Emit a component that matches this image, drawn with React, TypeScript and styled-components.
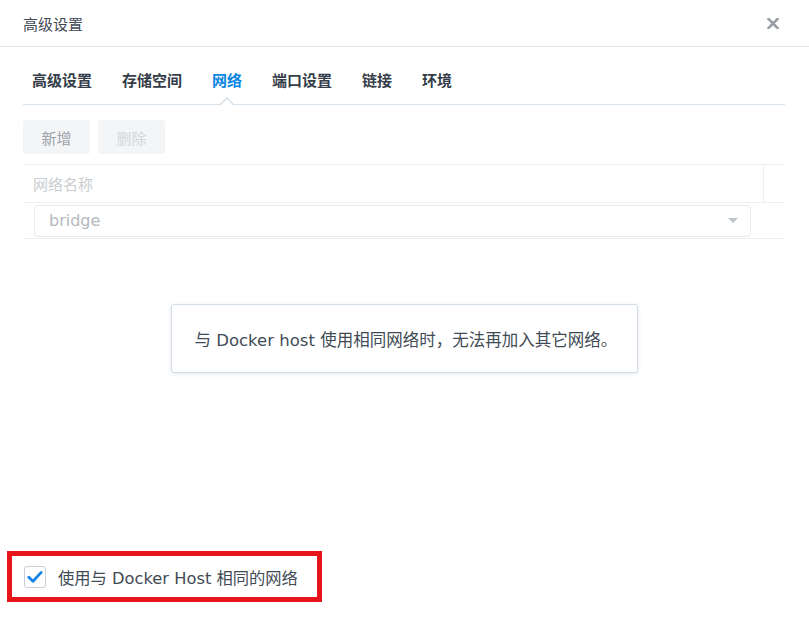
import React, { useState } from 'react';
import styled, { createGlobalStyle } from 'styled-components';

const GlobalStyle = createGlobalStyle`
  html, body {
    margin: 0;
    padding: 0;
    background: #ffffff;
  }
  body {
    font-family: 'DejaVu Sans', 'Noto Sans CJK SC', sans-serif;
  }
`;

const Dialog = styled.div`
  width: 809px;
  height: 624px;
  display: flex;
  flex-direction: column;
  background: #ffffff;
  box-sizing: border-box;
`;

const Header = styled.div`
  height: 47px;
  display: flex;
  align-items: center;
  justify-content: space-between;
  padding: 0 28px 0 23px;
  border-bottom: 1px solid #e5e9ee;
  box-sizing: border-box;
`;

const Title = styled.div`
  font-size: 15px;
  color: #3f4a56;
  font-family: 'Noto Sans CJK SC', sans-serif;
`;

const CloseButton = styled.button`
  border: none;
  background: none;
  padding: 0;
  width: 16px;
  height: 16px;
  display: flex;
  align-items: center;
  justify-content: center;
  cursor: pointer;
`;

const Body = styled.div`
  flex: 1;
  display: flex;
  flex-direction: column;
  padding: 0 24px 0 23px;
`;

const TabList = styled.div`
  display: flex;
  gap: 30px;
  padding: 0 0 0 9px;
  height: 58px;
  align-items: flex-end;
  border-bottom: 1px solid #d6e1eb;
  box-sizing: border-box;
`;

const Tab = styled.div<{ $active?: boolean }>`
  position: relative;
  font-family: 'Noto Sans CJK SC', sans-serif;
  font-size: 15px;
  font-weight: 700;
  line-height: 22px;
  padding-bottom: 13px;
  color: ${(p) => (p.$active ? '#0a86e3' : '#343d48')};
  cursor: pointer;
`;

/* small notch on the tab rule under the active tab */
const Notch = styled.span`
  position: absolute;
  left: 50%;
  bottom: -1px;
  width: 0;
  height: 0;
  transform: translateX(-50%);
  border-left: 8px solid transparent;
  border-right: 8px solid transparent;
  border-bottom: 8px solid #d6e1eb;

  &::after {
    content: '';
    position: absolute;
    left: -7px;
    top: 1.5px;
    border-left: 7px solid transparent;
    border-right: 7px solid transparent;
    border-bottom: 7px solid #ffffff;
  }
`;

const Toolbar = styled.div`
  display: flex;
  gap: 8px;
  margin-top: 15px;
`;

const ToolButton = styled.button<{ $disabled?: boolean }>`
  width: 67px;
  height: 34px;
  border: none;
  border-radius: 3px;
  background: #f3f5f7;
  font-family: 'Noto Sans CJK SC', sans-serif;
  font-size: 15px;
  color: ${(p) => (p.$disabled ? '#d3d7db' : '#9ca2a8')};
  cursor: ${(p) => (p.$disabled ? 'default' : 'pointer')};
`;

const Grid = styled.div`
  margin-top: 10px;
  border-top: 1px solid #edf0f3;
`;

const GridHeader = styled.div`
  display: grid;
  grid-template-columns: 1fr 21px;
  height: 38px;
  border-bottom: 1px solid #edf0f3;
  box-sizing: border-box;
`;

const HeaderCell = styled.div<{ $divider?: boolean }>`
  display: flex;
  align-items: center;
  padding-left: 10px;
  font-family: 'Noto Sans CJK SC', sans-serif;
  font-size: 15px;
  color: #c9cdd2;
  border-right: ${(p) => (p.$divider ? '1px solid #edf0f3' : 'none')};
`;

const GridRow = styled.div`
  height: 36px;
  display: flex;
  align-items: center;
  padding: 0 34px 0 11px;
  border-bottom: 1px solid #edf0f3;
  box-sizing: border-box;
`;

const Select = styled.div`
  flex: 1;
  height: 32px;
  display: flex;
  align-items: center;
  justify-content: space-between;
  padding: 0 12px 0 14px;
  border: 1px solid #e7eaee;
  border-radius: 4px;
  box-sizing: border-box;
  font-size: 16px;
  color: #b4b9be;
`;

const Caret = styled.span`
  width: 0;
  height: 0;
  border-left: 5px solid transparent;
  border-right: 5px solid transparent;
  border-top: 5px solid #bfc4c9;
`;

const Toast = styled.div`
  align-self: center;
  margin-top: 65px;
  width: 467px;
  height: 69px;
  display: flex;
  align-items: center;
  padding-left: 23px;
  box-sizing: border-box;
  border: 1px solid #d3dde7;
  border-radius: 3px;
  box-shadow: 0 1px 4px rgba(40, 60, 80, 0.12);
  font-size: 16.5px;
  color: #414b55;
  background: #ffffff;
`;

const Footer = styled.div`
  margin: auto 0 22px 7px;
  width: 315px;
  height: 51px;
  display: flex;
  align-items: center;
  gap: 12px;
  padding-left: 12px;
  border: 5px solid #e8141c;
  box-sizing: border-box;
`;

const CheckBox = styled.span`
  width: 22px;
  height: 22px;
  display: flex;
  align-items: center;
  justify-content: center;
  border: 1px solid #c6ced7;
  border-radius: 3px;
  background: #ffffff;
  box-sizing: border-box;
  cursor: pointer;
`;

const CheckLabel = styled.span`
  font-size: 16.3px;
  color: #414b55;
  cursor: pointer;
`;

const tabs = ['高级设置', '存储空间', '网络', '端口设置', '链接', '环境'];

const App: React.FC = () => {
  const [activeTab, setActiveTab] = useState<number>(2);
  const [useHostNet, setUseHostNet] = useState<boolean>(true);

  return (
    <>
      <GlobalStyle />
      <Dialog>
        <Header>
          <Title>高级设置</Title>
          <CloseButton aria-label='close'>
            <svg width='12' height='11' viewBox='0 0 12 11'>
              <path
                d='M1.5 1 L10.5 10 M10.5 1 L1.5 10'
                stroke='#9a9fa5'
                strokeWidth='2.6'
                strokeLinecap='square'
              />
            </svg>
          </CloseButton>
        </Header>
        <Body>
          <TabList>
            {tabs.map((t, i) => (
              <Tab key={t} $active={i === activeTab} onClick={() => setActiveTab(i)}>
                {t}
                {i === activeTab && <Notch />}
              </Tab>
            ))}
          </TabList>
          <Toolbar>
            <ToolButton>新增</ToolButton>
            <ToolButton $disabled>删除</ToolButton>
          </Toolbar>
          <Grid>
            <GridHeader>
              <HeaderCell $divider>网络名称</HeaderCell>
              <HeaderCell />
            </GridHeader>
            <GridRow>
              <Select>
                <span>bridge</span>
                <Caret />
              </Select>
            </GridRow>
          </Grid>
          <Toast>与 Docker host 使用相同网络时，无法再加入其它网络。</Toast>
        </Body>
        <Footer>
          <CheckBox onClick={() => setUseHostNet(!useHostNet)}>
            {useHostNet && (
              <svg width='16' height='14' viewBox='0 0 16 14'>
                <path
                  d='M1.8 7.2 L6 11.2 L14.2 2.4'
                  fill='none'
                  stroke='#1684e6'
                  strokeWidth='2.8'
                  strokeLinecap='round'
                  strokeLinejoin='round'
                />
              </svg>
            )}
          </CheckBox>
          <CheckLabel onClick={() => setUseHostNet(!useHostNet)}>
            使用与 Docker Host 相同的网络
          </CheckLabel>
        </Footer>
      </Dialog>
    </>
  );
};

export default App;
